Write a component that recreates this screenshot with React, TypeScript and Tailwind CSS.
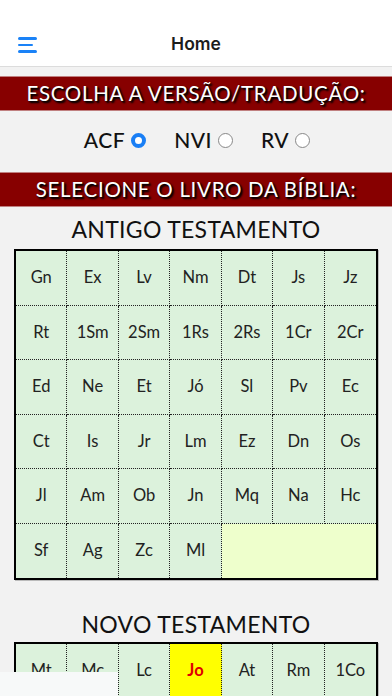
import React from "react";

const OT = [
  "Gn","Ex","Lv","Nm","Dt","Js","Jz",
  "Rt","1Sm","2Sm","1Rs","2Rs","1Cr","2Cr",
  "Ed","Ne","Et","Jó","Sl","Pv","Ec",
  "Ct","Is","Jr","Lm","Ez","Dn","Os",
  "Jl","Am","Ob","Jn","Mq","Na","Hc",
  "Sf","Ag","Zc","Ml",
];
const NT = [
  "Mt","Mc","Lc","Jo","At","Rm","1Co",
  "2Co","Gl","Ef","Fp","Cl","1Ts","2Ts",
];

const lato = { fontFamily: "Lato, 'Open Sans', sans-serif" };

function Banner({ text }: { text: string }) {
  return (
    <div
      className="h-[35px] bg-[#870000] border-y border-[#c08080] flex items-center justify-center text-white text-[20.5px] tracking-[0.7px]"
      style={{ ...lato, textShadow: "1px 1px 2px #000, 2px 2px 2px #000" }}
    >
      {text}
    </div>
  );
}

function Radio({ label, checked }: { label: string; checked?: boolean }) {
  return (
    <div className="flex items-center gap-[6px]">
      <span className="text-[21px] font-medium text-[#111] tracking-[0.5px]" style={lato}>{label}</span>
      {checked ? (
        <span className="w-[15px] h-[15px] rounded-full border-[4px] border-[#1a7ff5] bg-white mt-[1px]" />
      ) : (
        <span className="w-[15px] h-[15px] rounded-full border border-[#888] bg-white mt-[1px]" />
      )}
    </div>
  );
}

function Grid({ books, rows, fillLast, highlight }: { books: string[]; rows: number; fillLast?: boolean; highlight?: string }) {
  const total = rows * 7;
  const cells = books.slice(0, total);
  return (
    <div className="mx-[14px] border-2 border-black bg-[#dcf2dc] grid grid-cols-7 shadow-[1px_1px_0_#bbb]">
      {cells.map((b, i) => {
        const col = i % 7;
        const row = Math.floor(i / 7);
        const isHi = b === highlight;
        return (
          <div
            key={b}
            className={
              "h-[54.5px] flex items-center justify-center text-[16.5px] border-dotted border-[#222] " +
              (col < 6 ? "border-r " : "") +
              (row < rows - 1 ? "border-b " : "") +
              (isHi ? "bg-[#ffff00] text-[#e00000] font-bold" : "text-[#222]")
            }
            style={lato}
          >
            {b}
          </div>
        );
      })}
      {fillLast && <div className="col-span-3 h-[54.5px] bg-[#eeffcc]" />}
    </div>
  );
}

export default function App() {
  return (
    <div className="relative w-[392px] h-[696px] overflow-hidden bg-[#f2f2f2]">
      <div className="h-[67px] bg-white border-b border-[#dcdcdc] flex items-end relative">
        <div className="absolute left-[18px] top-[37px] flex flex-col gap-[4px]">
          <span className="block w-[19px] h-[2.5px] bg-[#1a82f7] rounded" />
          <span className="block w-[15px] h-[2.5px] bg-[#1a82f7] rounded" />
          <span className="block w-[19px] h-[2.5px] bg-[#1a82f7] rounded" />
        </div>
        <div
          className="w-full h-[44px] flex items-center justify-center text-[17.5px] font-semibold text-[#1c1c1c]"
          style={{ fontFamily: "Inter, 'Liberation Sans', sans-serif" }}
        >
          Home
        </div>
      </div>
      <div className="h-[9px]" />
      <Banner text="ESCOLHA A VERSÃO/TRADUÇÃO:" />
      <div className="h-[61px] flex items-center justify-center gap-[28px] pl-[2px] pb-[4px]">
        <Radio label="ACF" checked />
        <Radio label="NVI" />
        <Radio label="RV" />
      </div>
      <Banner text="SELECIONE O LIVRO DA BÍBLIA:" />
      <div className="h-[42px] flex items-center justify-center pt-[3px] text-[23px] text-[#111] tracking-[0.3px]" style={lato}>
        ANTIGO TESTAMENTO
      </div>
      <Grid books={OT} rows={6} fillLast />
      <div className="h-[62px] flex items-end justify-center pb-[1px] text-[23px] text-[#111] tracking-[0.3px]" style={lato}>
        NOVO TESTAMENTO
      </div>
      <Grid books={NT} rows={2} highlight="Jo" />
      <div className="absolute left-0 top-[672px] w-[118px] h-[24px] bg-[#f7f9f9]" />
    </div>
  );
}
